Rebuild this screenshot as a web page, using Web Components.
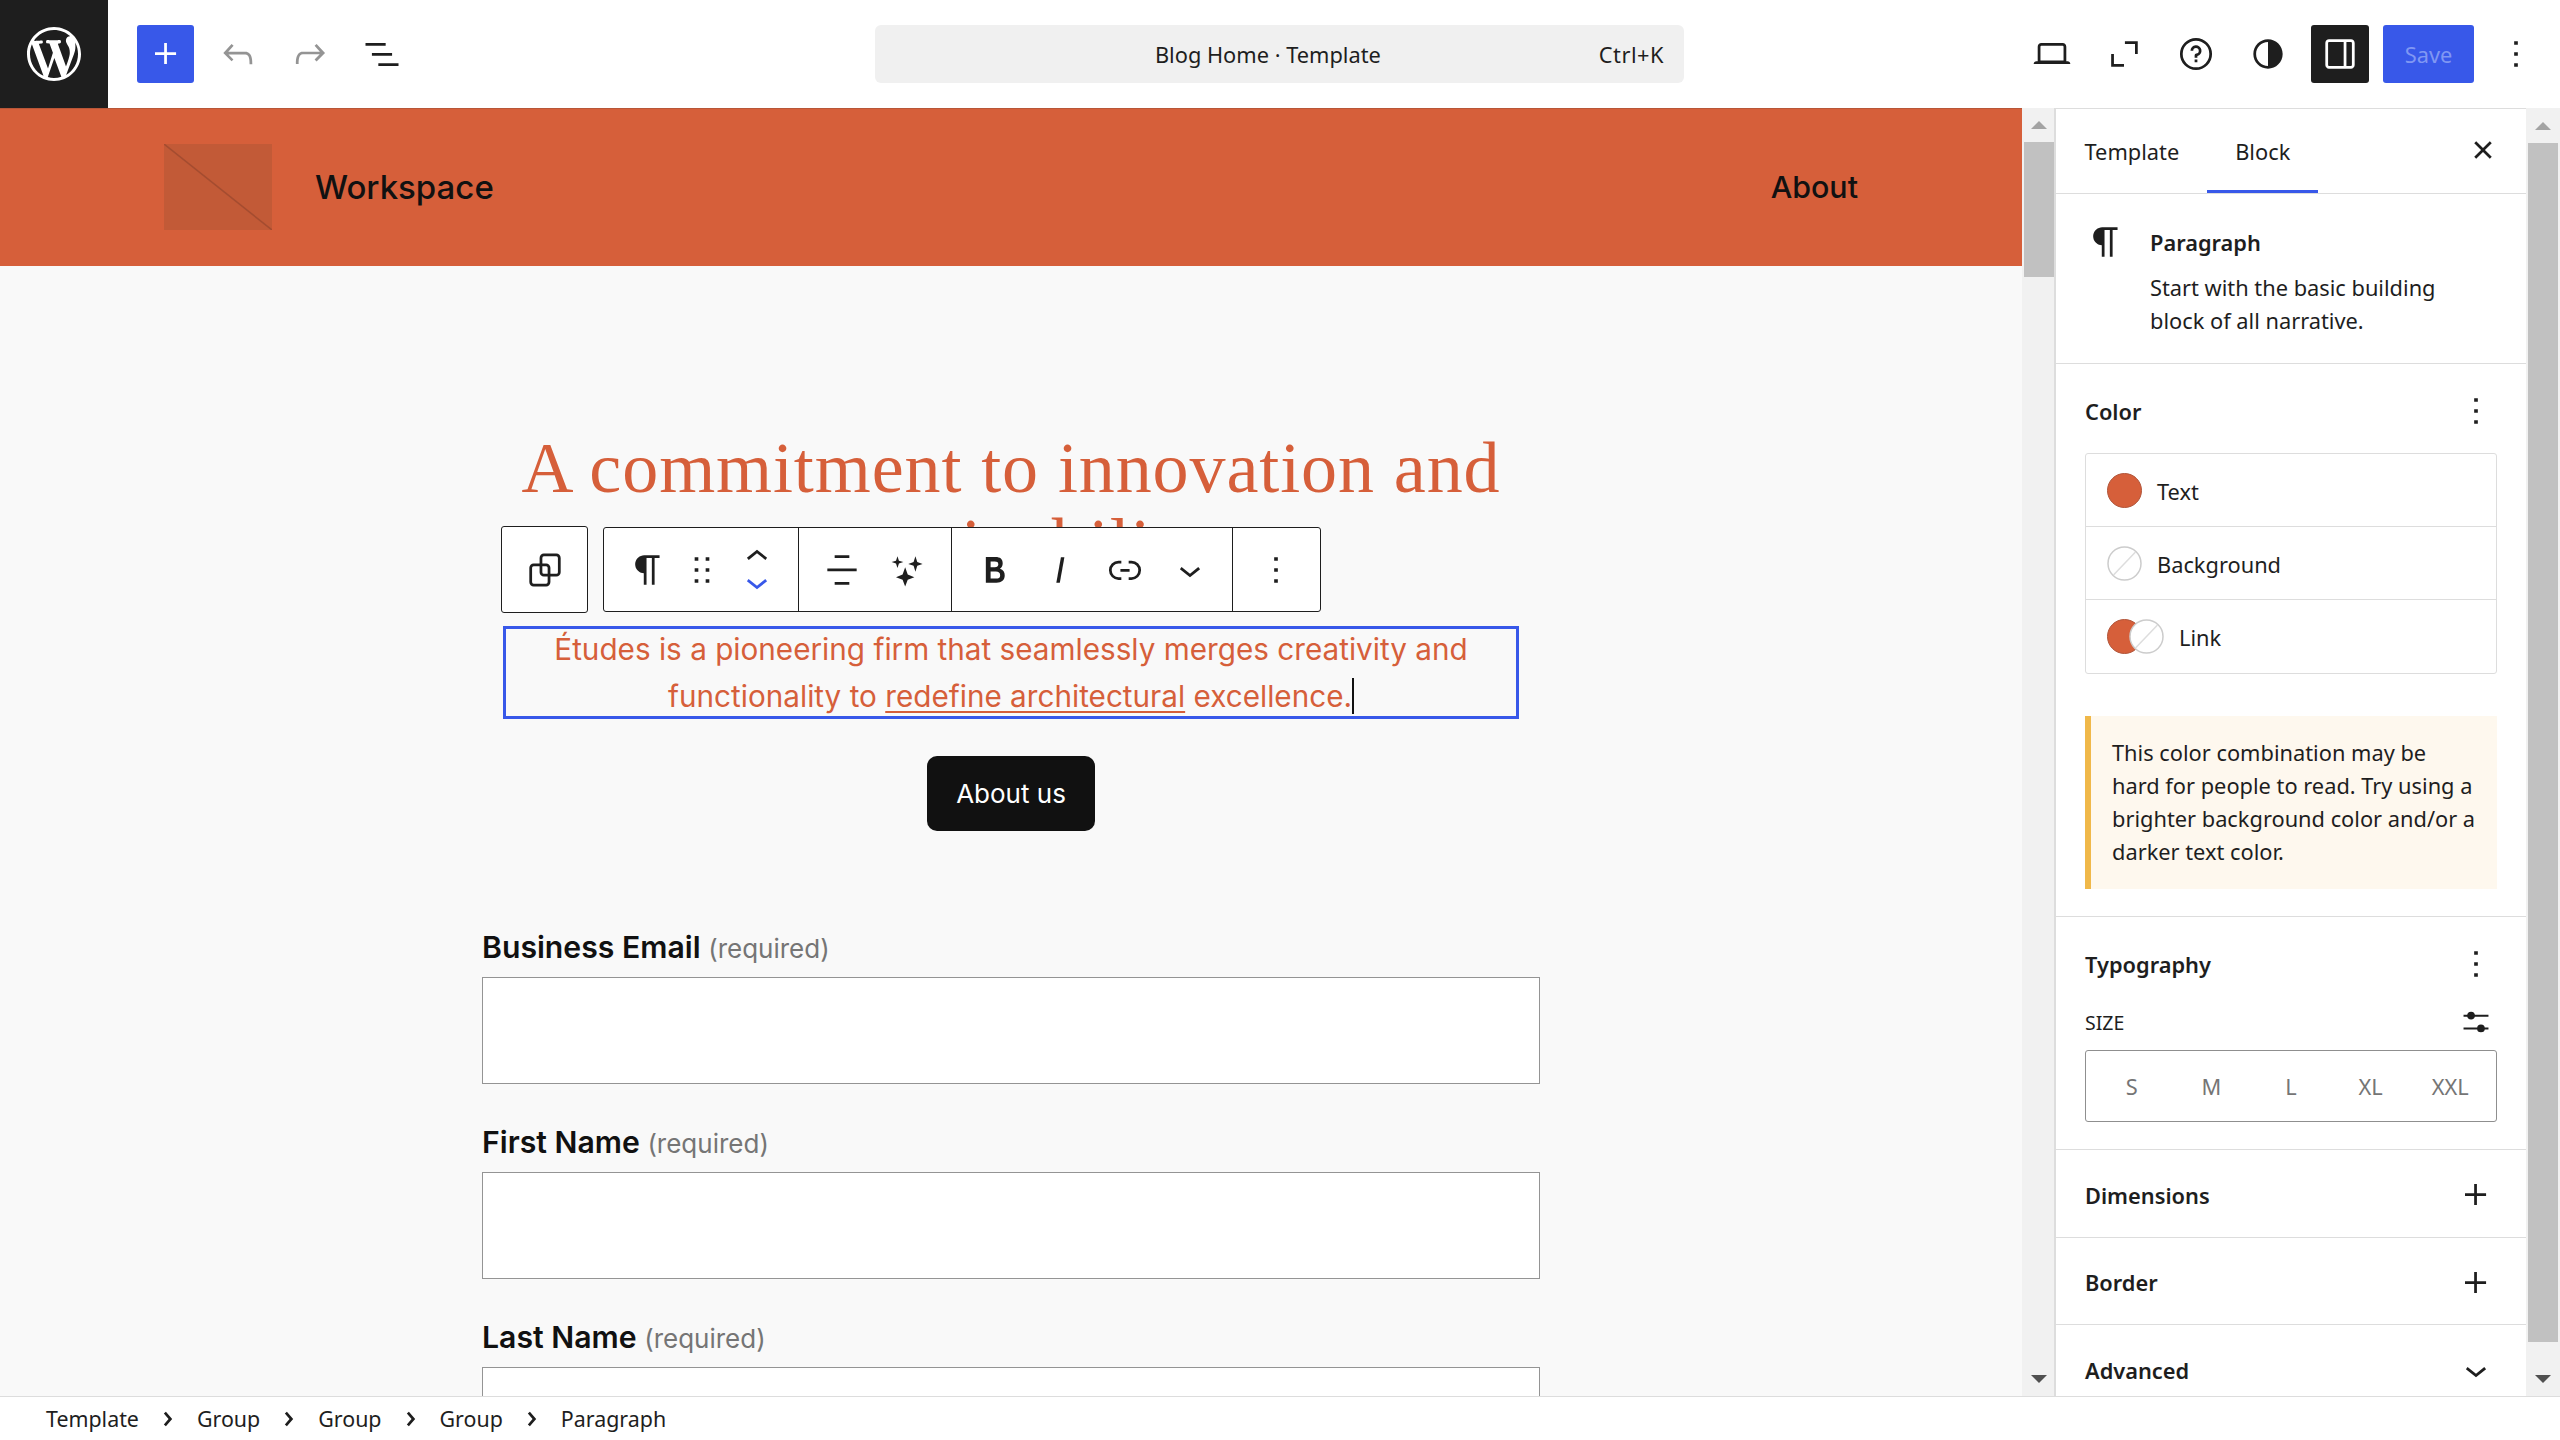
<!DOCTYPE html>
<html lang="en">
<head>
<meta charset="utf-8">
<title>Blog Home - Template</title>
<style>
  html, body { margin: 0; height: 100%; overflow: hidden; background: #fff; }
  body { font-family: "Noto Sans", sans-serif; font-size: 21.8px; color: #1e1e1e; }
</style>
</head>
<body>
<site-editor></site-editor>

<script>
const ICONS = {
  wordpress: { box: 20, d: "M20 10c0-5.51-4.49-10-10-10C4.48 0 0 4.49 0 10c0 5.52 4.48 10 10 10 5.51 0 10-4.48 10-10zM7.78 15.37L4.37 6.22c.55-.02 1.17-.08 1.17-.08.5-.06.44-1.13-.06-1.11 0 0-1.45.11-2.37.11-.18 0-.37 0-.58-.01C4.12 2.69 6.87 1.11 10 1.11c2.33 0 4.45.87 6.05 2.34-.68-.11-1.65.39-1.65 1.58 0 .74.45 1.36.9 2.1.35.61.55 1.36.55 2.46 0 1.49-1.4 5-1.4 5l-3.03-8.37c.54-.02.82-.17.82-.17.5-.05.44-1.25-.06-1.22 0 0-1.44.12-2.38.12-.87 0-2.33-.12-2.33-.12-.5-.03-.56 1.2-.06 1.22l.92.08 1.26 3.41zM17.41 10c.24-.64.74-1.87.43-4.25.7 1.29 1.05 2.71 1.05 4.25 0 3.29-1.73 6.24-4.4 7.78.97-2.59 1.94-5.2 2.92-7.78zM6.1 18.09C3.12 16.65 1.11 13.53 1.11 10c0-1.3.23-2.48.72-3.59C3.25 10.3 4.67 14.2 6.1 18.09zm4.03-6.63l2.58 6.98c-.86.29-1.76.45-2.71.45-.79 0-1.57-.11-2.29-.33.81-2.38 1.62-4.74 2.42-7.1z" },
  plus: { d: "M11 12.5V17.5H12.5V12.5H17.5V11H12.5V6H11V11H6V12.5H11Z" },
  undo: { d: "M18.3 11.7c-.6-.6-1.4-.9-2.3-.9H6.7l2.9-3.3-1.1-1-4.5 5L8.5 16l1-1-2.7-2.7H16c.5 0 .9.2 1.3.5 1 1 1 3.4 1 4.5v.3h1.5v-.2c0-1.5 0-4.3-1.5-5.7z" },
  redo: { d: "M15.6 6.5l-1.1 1 2.9 3.3H8c-.9 0-1.7.3-2.3.9-1.4 1.5-1.4 4.2-1.4 5.6v.2h1.5v-.3c0-1.1 0-3.5 1-4.5.3-.3.7-.5 1.3-.5h9.2L14.5 15l1.1 1.1 4.6-4.6-4.6-5z" },
  listview: { d: "M3 6h11v1.5H3V6Zm3.5 5.5h11V13h-11v-1.5ZM21 17H10v1.5h11V17Z" },
  laptop: { d: "M20.5 16h-.7V8c0-1.1-.9-2-2-2H6.2c-1.1 0-2 .9-2 2v8h-.7c-.8 0-1.5.7-1.5 1.5h20c0-.8-.7-1.5-1.5-1.5zM5.7 8c0-.3.2-.5.5-.5h11.6c.3 0 .5.2.5.5v7.6H5.7V8z" },
  fullscreen: { d: "M12.5 5h7v7H18V6.5h-5.5V5ZM5 12h1.5v5.5H12V19H5v-7Z" },
  help: { d: "M12 4.75a7.25 7.25 0 100 14.5 7.25 7.25 0 000-14.5zM3.25 12a8.75 8.75 0 1117.5 0 8.75 8.75 0 01-17.5 0zM12 8.75a1.5 1.5 0 01.167 2.99c-.465.052-.917.44-.917 1.01V14h1.5v-.845A3 3 0 109 10.25h1.5a1.5 1.5 0 011.5-1.5zM11.25 15v1.5h1.5V15h-1.5z" },
  contrast: { d: "M12 4c-4.4 0-8 3.6-8 8s3.6 8 8 8 8-3.6 8-8-3.6-8-8-8zm0 14.5c-3.6 0-6.5-2.9-6.5-6.5S8.4 5.5 12 5.5v13z" },
  sidebar: { d: "M18 4H6c-1.1 0-2 .9-2 2v12c0 1.1.9 2 2 2h12c1.1 0 2-.9 2-2V6c0-1.1-.9-2-2-2zm-4 14.5H6c-.3 0-.5-.2-.5-.5V6c0-.3.2-.5.5-.5h8v13zm4.5-.5c0 .3-.2.5-.5.5h-2.5v-13H18c.3 0 .5.2.5.5v12z" },
  more: { d: "M13 19h-2v-2h2v2zm0-6h-2v-2h2v2zm0-6h-2V5h2v2z" },
  close: { d: "M12 13.06l3.712 3.713 1.061-1.06L13.061 12l3.712-3.712-1.06-1.06L12 10.938 8.288 7.227l-1.061 1.06L10.939 12l-3.712 3.712 1.06 1.061L12 13.061z" },
  paragraph: { d: "M18.3 4H9.9v-.1l-.9.2c-2.3.4-4 2.4-4 4.8s1.7 4.4 4 4.8l.7.1V20h1.5V5.5h2.9V20h1.5V5.5h2.7V4z" },
  drag: { d: "M8 7h2V5H8v2zm0 6h2v-2H8v2zm0 6h2v-2H8v2zm6-14v2h2V5h-2zm0 8h2v-2h-2v2zm0 6h2v-2h-2v2z" },
  up: { d: "M6.5 12.4L12 8l5.5 4.4-.9 1.2L12 10l-4.5 3.6-1-1.2z" },
  down: { d: "M17.5 11.6L12 16l-5.5-4.4.9-1.2L12 14l4.5-3.6 1 1.2z" },
  aligncenter: { d: "M8 5.5h8V4H8v1.5Zm-4 7.2h16v-1.5H4v1.5ZM8 20h8v-1.5H8V20Z" },
  sparkles: { d: "M6.8 4.5l.8 2.4 2.4.8-2.4.8-.8 2.4-.8-2.4-2.4-.8 2.4-.8.8-2.4ZM16.6 4.5l1 3.2 2.9 1-2.9 1-1 3.2-1-3.2-2.9-1 2.9-1 1-3.2ZM11 10.5l1.4 4 3.6 1.4-3.6 1.4L11 21l-1.4-3.7-3.6-1.4 3.6-1.4 1.4-4Z" },
  bold: { d: "M14.7 11.3c1-.6 1.5-1.6 1.5-3 0-2.3-1.3-3.4-4-3.4H7v14h5.8c1.4 0 2.5-.3 3.3-1 .8-.7 1.2-1.7 1.2-2.9.1-1.9-.8-3.1-2.6-3.7zm-5.1-4h2.3c.6 0 1.1.1 1.4.4.3.3.5.7.5 1.2s-.2 1-.5 1.2c-.3.3-.8.4-1.4.4H9.6V7.3zm4.6 9c-.4.3-1 .4-1.7.4H9.6v-3.9h2.9c.7 0 1.3.2 1.7.5.4.3.6.8.6 1.5s-.2 1.2-.6 1.5z" },
  italic: { d: "M12.5 5L10 19h1.9l2.5-14z" },
  link: { d: "M10 17.389H8.444A5.194 5.194 0 1 1 8.444 7H10v1.5H8.444a3.694 3.694 0 0 0 0 7.389H10v1.5ZM14 7h1.556a5.194 5.194 0 0 1 0 10.39H14v-1.5h1.556a3.694 3.694 0 0 0 0-7.39H14V7Zm-4.5 6h5v-1.5h-5V13Z" },
  sliders: { raw: '<path d="M5.2 8h13.6v1.1H5.2zM5.2 15h13.6v1.1H5.2z"/><circle cx="9.3" cy="8.5" r="2.1"/><circle cx="14.7" cy="15.5" r="2.1"/>' },
  chevron: { d: "M10.8622 8.04053L14.2805 12.0286L10.8622 16.0167L9.72327 15.0405L12.3049 12.0286L9.72327 9.01672L10.8622 8.04053Z" },
  duplicate: { raw: '<g fill="none" stroke="currentColor" stroke-width="1.5"><rect x="4.2" y="9.2" width="10" height="11" rx="1.6"/><rect x="9.8" y="3.8" width="10" height="11" rx="1.6"/></g>' }
};

class WpIcon extends HTMLElement {
  connectedCallback() {
    const icon = ICONS[this.getAttribute("name")];
    const size = this.getAttribute("size") || 44;
    const box = icon.box || 24;
    const root = this.attachShadow({ mode: "open" });
    root.innerHTML = `
      <style>
        :host { display: inline-flex; flex: none; width: ${size}px; height: ${size}px; }
        svg { width: 100%; height: 100%; display: block; fill: currentColor; }
      </style>
      <svg viewBox="0 0 ${box} ${box}">${icon.raw || `<path d="${icon.d}"/>`}</svg>`;
  }
}
customElements.define("wp-icon", WpIcon);

class EditorTopbar extends HTMLElement {
  connectedCallback() {
    const root = this.attachShadow({ mode: "open" });
    root.innerHTML = `
      <style>
        :host { display: grid; grid-template-columns: 875px 809px 1fr; align-items: center; height: 108px; background: #fff; }
        .left, .right { display: flex; align-items: center; height: 100%; }
        .logo { width: 108px; height: 108px; background: #1e1e1e; color: #fff; display: flex; align-items: center; justify-content: center; }
        .left { gap: 28px; }
        .add { width: 57px; height: 58px; margin: 0 -6px 0 1px; background: #3858e9; color: #fff; border-radius: 3px; display: flex; align-items: center; justify-content: center; }
        .muted { color: #949494; }
        .command { height: 58px; background: #f0f0f0; border-radius: 6px; display: flex; align-items: center; box-sizing: border-box; padding: 0 20px 0 0; }
        .title { flex: 1; text-align: center; padding-left: 62px; }
        .keys { letter-spacing: .5px; }
        .right { justify-content: flex-end; padding-right: 22px; }
        .views { display: flex; gap: 28px; margin-right: 21px; }
        .toggle { width: 58px; height: 58px; background: #1e1e1e; color: #fff; border-radius: 3px; display: flex; align-items: center; justify-content: center; margin-right: 14px; }
        .save { width: 91px; height: 58px; background: #3858e9; color: #8097f3; border-radius: 3px; display: flex; align-items: center; justify-content: center; margin-right: 20px; }
      </style>
      <div class="left">
        <div class="logo"><wp-icon name="wordpress" size="54"></wp-icon></div>
        <div class="add"><wp-icon name="plus"></wp-icon></div>
        <wp-icon class="muted" name="undo"></wp-icon>
        <wp-icon class="muted" name="redo"></wp-icon>
        <wp-icon name="listview"></wp-icon>
      </div>
      <div class="command"><span class="title">Blog Home · Template</span><span class="keys">Ctrl+K</span></div>
      <div class="right">
        <div class="views">
          <wp-icon name="laptop"></wp-icon>
          <wp-icon name="fullscreen"></wp-icon>
          <wp-icon name="help"></wp-icon>
          <wp-icon name="contrast"></wp-icon>
        </div>
        <div class="toggle"><wp-icon name="sidebar"></wp-icon></div>
        <div class="save">Save</div>
        <wp-icon name="more"></wp-icon>
      </div>`;
  }
}
customElements.define("editor-topbar", EditorTopbar);

class FakeScrollbar extends HTMLElement {
  connectedCallback() {
    const thumb = this.getAttribute("thumb");
    const pad = this.getAttribute("pad") || "0 0 0 2px";
    const root = this.attachShadow({ mode: "open" });
    root.innerHTML = `
      <style>
        :host { display: flex; flex-direction: column; background: #f1f1f1; padding: ${pad}; overflow: hidden; }
        .btn { height: 34px; flex: none; display: flex; align-items: center; justify-content: center; }
        .up { width: 0; height: 0; border: 8px solid transparent; border-top: 0; border-bottom: 8px solid #a3a3a3; }
        .down { width: 0; height: 0; border: 8px solid transparent; border-bottom: 0; border-top: 8px solid #505050; }
        .thumb { height: ${thumb}px; background: #c1c1c1; flex: none; }
        .fill { flex: 1; }
      </style>
      <div class="btn"><div class="up"></div></div>
      <div class="thumb"></div>
      <div class="fill"></div>
      <div class="btn"><div class="down"></div></div>`;
  }
}
customElements.define("fake-scrollbar", FakeScrollbar);

class SiteHeader extends HTMLElement {
  connectedCallback() {
    const root = this.attachShadow({ mode: "open" });
    root.innerHTML = `
      <style>
        :host { display: flex; align-items: center; height: 155px; flex: none; background: #d65f3a; border-top: 1px solid #b85638; padding: 0 164px 2px; color: #111; font-size: 33px; font-weight: 500; }
        .mark { width: 108px; height: 86px; margin-right: 43px; }
        .mark svg { display: block; width: 100%; height: 100%; }
        .name { flex: 1; }
        .nav { font-size: 30.4px; }
      </style>
      <div class="mark"><svg viewBox="0 0 108 86" preserveAspectRatio="none"><rect width="108" height="86" fill="#c25a37"/><line x1="0" y1="0" x2="108" y2="86" stroke="#a44c30" stroke-width="1.5"/></svg></div>
      <span class="name">Workspace</span>
      <span class="nav">About</span>`;
  }
}
customElements.define("site-header", SiteHeader);

class BlockToolbar extends HTMLElement {
  connectedCallback() {
    const root = this.attachShadow({ mode: "open" });
    root.innerHTML = `
      <style>
        :host { position: absolute; left: 501px; top: 418px; display: flex; gap: 15px; color: #1e1e1e; z-index: 2; }
        .box { background: #fff; border: 1.5px solid #1e1e1e; border-radius: 3px; box-sizing: border-box; display: flex; height: 86px; }
        .single { width: 87px; height: 87px; align-items: center; justify-content: center; }
        .main { width: 718px; margin-top: 1px; height: 85px; }
        .group { display: flex; align-items: center; gap: 21px; padding: 0 20.5px; border-left: 1.5px solid #1e1e1e; }
        .group:first-child { border-left: 0; gap: 10.5px; padding-left: 21.5px; width: 194px; box-sizing: border-box; }
        .group.two { width: 153px; box-sizing: border-box; }
        .group.three { width: 281px; box-sizing: border-box; }
        .mover { display: flex; flex-direction: column; }
        .mover div { height: 25px; display: flex; align-items: center; justify-content: center; }
        .blue { color: #3858e9; }
      </style>
      <div class="box single"><wp-icon name="duplicate"></wp-icon></div>
      <div class="box main">
        <div class="group">
          <wp-icon name="paragraph"></wp-icon>
          <wp-icon name="drag"></wp-icon>
          <div class="mover"><div><wp-icon name="up"></wp-icon></div><div class="blue"><wp-icon name="down"></wp-icon></div></div>
        </div>
        <div class="group two"><wp-icon name="aligncenter"></wp-icon><wp-icon name="sparkles"></wp-icon></div>
        <div class="group three">
          <wp-icon name="bold"></wp-icon>
          <wp-icon name="italic"></wp-icon>
          <wp-icon name="link"></wp-icon>
          <wp-icon name="down"></wp-icon>
        </div>
        <div class="group"><wp-icon name="more"></wp-icon></div>
      </div>`;
  }
}
customElements.define("block-toolbar", BlockToolbar);

class FormField extends HTMLElement {
  connectedCallback() {
    const root = this.attachShadow({ mode: "open" });
    root.innerHTML = `
      <style>
        :host { display: block; margin-bottom: 38px; }
        label { display: block; height: 40px; line-height: 40px; margin-bottom: 10px; font-size: 30.2px; font-weight: 600; color: #111; }
        small { font-size: 26px; font-weight: 400; color: #757575; }
        .input { height: 107px; box-sizing: border-box; background: #fff; border: 1.5px solid #949494; }
      </style>
      <label><slot></slot> <small>(required)</small></label>
      <div class="input"></div>`;
  }
}
customElements.define("form-field", FormField);

class EditorCanvas extends HTMLElement {
  connectedCallback() {
    const root = this.attachShadow({ mode: "open" });
    root.innerHTML = `
      <style>
        :host { display: flex; flex-direction: column; position: relative; overflow: hidden; background: #f9f9f9; font-family: Inter, sans-serif; min-height: 0; }
        main { width: 1058px; margin: 0 auto; padding-top: 164px; text-align: center; }
        h2 { margin: 0; font: 400 72px/76px "Liberation Serif", serif; letter-spacing: .9px; color: #d65f3a; }
        .lead { margin: 44px 21px 0; font-size: 29.7px; line-height: 46.5px; color: #d65f3a; outline: 3px solid #3858e9; outline-offset: -3px; }
        .lead a { color: inherit; text-decoration: underline; text-underline-offset: 4px; }
        .caret { display: inline-block; width: 2px; height: 36px; background: #111; vertical-align: -7px; }
        .cta { display: inline-flex; align-items: center; justify-content: center; width: 168px; height: 75px; margin-top: 37px; padding-bottom: 1px; box-sizing: border-box; background: #111; color: #fff; border-radius: 10px; font-size: 26px; }
        form { margin-top: 96px; text-align: left; }
      </style>
      <site-header></site-header>
      <block-toolbar></block-toolbar>
      <main>
        <h2>A commitment to innovation and<br>sustainability</h2>
        <p class="lead">Études is a pioneering firm that seamlessly merges creativity and<br>functionality to <a>redefine architectural</a> excellence.<span class="caret"></span></p>
        <div class="cta">About us</div>
        <form>
          <form-field>Business Email</form-field>
          <form-field>First Name</form-field>
          <form-field>Last Name</form-field>
        </form>
      </main>`;
  }
}
customElements.define("editor-canvas", EditorCanvas);

class PanelSection extends HTMLElement {
  connectedCallback() {
    const action = this.getAttribute("action");
    const root = this.attachShadow({ mode: "open" });
    root.innerHTML = `
      <style>
        :host { display: block; border-top: 1.5px solid #ddd; padding: 0 29px 0 29px; }
        header { display: flex; align-items: center; justify-content: space-between; height: var(--row, 46px); padding-top: var(--top, 24px); }
        h3 { margin: 0; font-size: inherit; font-weight: 600; }
        wp-icon { margin-right: -1px; margin-left: -20px; }
      </style>
      <header><h3>${this.getAttribute("title")}</h3><wp-icon name="${action}"></wp-icon></header>
      <slot></slot>`;
  }
}
customElements.define("panel-section", PanelSection);

class ColorRow extends HTMLElement {
  connectedCallback() {
    const kind = this.getAttribute("kind");
    const filled = '<circle cx="17.5" cy="17.5" r="17" fill="#d65f3a" stroke="#b0553a" stroke-width="1"/>';
    const empty = (cx) => `<circle cx="${cx}" cy="17.5" r="16.5" fill="#fff" stroke="#ccc" stroke-width="1.5"/><line x1="${cx - 11}" y1="29" x2="${cx + 11}" y2="6" stroke="#ddd" stroke-width="1.5"/>`;
    const art = kind === "text" ? filled : kind === "background" ? empty(17.5) : filled + empty(39.5);
    const width = kind === "link" ? 57 : 35;
    const root = this.attachShadow({ mode: "open" });
    root.innerHTML = `
      <style>
        :host { display: flex; align-items: center; height: 73px; box-sizing: border-box; padding-left: 21px; gap: 15px; }
        :host(:not(:last-child)) { border-bottom: 1.5px solid #ddd; }
        svg { display: block; width: ${width}px; height: 35px; flex: none; }
        span { padding-top: 2px; }
      </style>
      <svg viewBox="0 0 ${width} 35">${art}</svg>
      <span><slot></slot></span>`;
  }
}
customElements.define("color-row", ColorRow);

class EditorSidebar extends HTMLElement {
  connectedCallback() {
    const root = this.attachShadow({ mode: "open" });
    root.innerHTML = `
      <style>
        :host { display: block; overflow: hidden; background: #fff; border-left: 2px solid #ddd; border-top: 1.5px solid #ddd; min-height: 0; }
        .tabs { display: flex; align-items: center; height: 84px; position: relative; }
        .tab { height: 100%; display: flex; align-items: center; padding: 1px 27.5px 0 28.5px; box-sizing: border-box; }
        .tab.on { box-shadow: inset 0 -3px 0 #3858e9; }
        .tabs wp-icon { margin: -2px 21px 0 auto; }
        .card { border-top: 1.5px solid #ddd; display: flex; height: 170px; box-sizing: border-box; padding: 26px 0 0 28px; gap: 22px; }
        .card b { display: block; font-weight: 600; line-height: 36px; margin: 5px 0 10px; }
        .card p { margin: 0; line-height: 33px; }
        .colors { margin-top: 19px; border: 1.5px solid #ddd; border-radius: 3px; }
        .notice { margin: 42px 0 27px; background: #fef8ee; border-left: 6px solid #f0b849; padding: 20px 15px 21px 21px; line-height: 33px; }
        .size { display: flex; align-items: center; justify-content: space-between; margin-top: 20px; height: 30px; font-size: 19.5px; text-transform: uppercase; }
        .size wp-icon { margin-right: -1px; margin-left: -20px; }
        .picker { margin: 13px 0 27px; height: 72px; box-sizing: border-box; border: 1.5px solid #8f8f8f; border-radius: 3px; display: grid; grid-template-columns: repeat(5, 1fr); padding: 0 6px; align-items: center; text-align: center; color: #757575; }
        .closed { --row: 82.5px; --top: 4px; }
      </style>
      <div class="tabs">
        <div class="tab">Template</div>
        <div class="tab on">Block</div>
        <wp-icon name="close"></wp-icon>
      </div>
      <div class="card">
        <wp-icon name="paragraph"></wp-icon>
        <div>
          <b>Paragraph</b>
          <p>Start with the basic building<br>block of all narrative.</p>
        </div>
      </div>
      <panel-section title="Color" action="more">
        <div class="colors">
          <color-row kind="text">Text</color-row>
          <color-row kind="background">Background</color-row>
          <color-row kind="link">Link</color-row>
        </div>
        <div class="notice">This color combination may be<br>hard for people to read. Try using a brighter background color and/or a darker text color.</div>
      </panel-section>
      <panel-section title="Typography" action="more">
        <div class="size"><span>Size</span><wp-icon name="sliders"></wp-icon></div>
        <div class="picker"><span>S</span><span>M</span><span>L</span><span>XL</span><span>XXL</span></div>
      </panel-section>
      <panel-section class="closed" title="Dimensions" action="plus"></panel-section>
      <panel-section class="closed" title="Border" action="plus"></panel-section>
      <panel-section class="closed" title="Advanced" action="down"></panel-section>`;
  }
}
customElements.define("editor-sidebar", EditorSidebar);

class BlockTrail extends HTMLElement {
  connectedCallback() {
    const items = ["Template", "Group", "Group", "Group", "Paragraph"];
    const root = this.attachShadow({ mode: "open" });
    root.innerHTML = `
      <style>
        :host { display: flex; align-items: center; background: #fff; border-top: 1.5px solid #ddd; padding-left: 46px; font-size: 21.4px; }
        wp-icon { margin: 0 7px; }
      </style>
      ${items.map((t) => `<span>${t}</span>`).join('<wp-icon name="chevron"></wp-icon>')}`;
  }
}
customElements.define("block-trail", BlockTrail);

class SiteEditor extends HTMLElement {
  connectedCallback() {
    const root = this.attachShadow({ mode: "open" });
    root.innerHTML = `
      <style>
        :host { display: grid; grid-template-rows: 108px 1fr 44px; width: 2560px; height: 1440px; }
        .body { display: grid; grid-template-columns: 2022px 32px 472px 34px; min-height: 0; }
      </style>
      <editor-topbar></editor-topbar>
      <div class="body">
        <editor-canvas></editor-canvas>
        <fake-scrollbar thumb="135"></fake-scrollbar>
        <editor-sidebar></editor-sidebar>
        <fake-scrollbar thumb="1199" pad="1px 2px 0 2px"></fake-scrollbar>
      </div>
      <block-trail></block-trail>`;
  }
}
customElements.define("site-editor", SiteEditor);
</script>
</body>
</html>
